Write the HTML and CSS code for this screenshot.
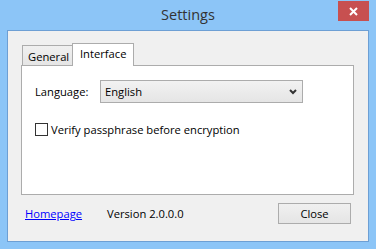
FILE: index.html
```html
<!DOCTYPE html>
<html lang="en">
<head>
  <meta charset="UTF-8">
  <title>Settings</title>
  <link rel="stylesheet" href="styles.css">
</head>
<body>
  <div class="window">
    <div class="titlebar">
      <span></span>
      <div class="title">Settings</div>
      <div class="close-x">
        <svg width="9" height="9" viewBox="0 0 9 9">
          <path d="M1 1 L8 8 M8 1 L1 8" stroke="#fff" stroke-width="2"/>
        </svg>
      </div>
    </div>
    <div class="client">
      <div class="tabs">
        <div class="tab">General</div>
        <div class="tab active">Interface</div>
      </div>
      <div class="panel">
        <div class="lang-row">
          <span class="label">Language:</span>
          <div class="select">
            <span>English</span>
            <svg width="8" height="6" viewBox="0 0 8 6">
              <path d="M1 1 L4 4 L7 1" stroke="#333" stroke-width="2" fill="none"/>
            </svg>
          </div>
        </div>
        <div class="check-row">
          <span class="checkbox"></span>
          <span>Verify passphrase before encryption</span>
        </div>
      </div>
      <div class="footer">
        <a class="link" href="#">Homepage</a>
        <span class="version">Version 2.0.0.0</span>
        <div class="button">Close</div>
      </div>
    </div>
  </div>
</body>
</html>
```

FILE: styles.css
```css
body {
  margin: 0;
  font-family: "Open Sans", "Noto Sans", sans-serif;
  font-size: 11.2px;
  color: #000;
}
.window {
  width: 376px;
  height: 249px;
  box-sizing: border-box;
  background-color: #8cc5f7;
}
.titlebar {
  height: 30px;
  display: grid;
  grid-template-columns: 1fr auto 1fr;
  padding: 0 7px;
}
.title {
  font-size: 14.5px;
  line-height: 29px;
  color: #333;
}
.close-x {
  justify-self: end;
  width: 31px;
  height: 20px;
  margin-top: 1px;
  background-color: #c75050;
  display: flex;
  align-items: center;
  justify-content: center;
}
.client {
  height: 212px;
  box-sizing: border-box;
  margin: 0 7px;
  padding: 12px 14px 0 13px;
  border: 1px solid #6d9fd4;
  background-color: #f0f0f0;
}
.tabs {
  height: 22px;
  display: flex;
  align-items: flex-end;
  padding-left: 1px;
}
.tab {
  width: 52px;
  height: 20px;
  box-sizing: border-box;
  padding: 1px 0 0 5px;
  line-height: 19px;
  border: 1px solid #acacac;
  border-bottom: none;
  background: linear-gradient(#f0f0f0, #e5e5e5);
}
.tab.active {
  width: 62px;
  height: 23px;
  margin-left: -2px;
  margin-bottom: -1px;
  padding: 0 0 0 7px;
  line-height: 19px;
  background: #fff;
  position: relative;
}
.panel {
  height: 130px;
  box-sizing: border-box;
  border: 1px solid #acacac;
  background-color: #fff;
  padding: 14px 13px 0;
}
.lang-row {
  display: flex;
  align-items: center;
}
.label {
  width: 65px;
}
.select {
  width: 203px;
  height: 23px;
  box-sizing: border-box;
  border: 1px solid #acacac;
  background: linear-gradient(#f2f2f2, #e5e5e5);
  display: flex;
  align-items: center;
  justify-content: space-between;
  padding: 0 5px 0 4px;
}
.check-row {
  margin-top: 19px;
  display: flex;
  align-items: center;
}
.checkbox {
  width: 13px;
  height: 13px;
  box-sizing: border-box;
  border: 1px solid #333;
  margin-right: 3px;
}
.footer {
  display: flex;
  align-items: center;
  margin-top: 8px;
  padding: 0 3px 0 4px;
}
.link {
  width: 58px;
  color: #0000ff;
}
.version {
  margin-left: 24px;
}
.button {
  margin-left: auto;
  width: 73px;
  height: 21px;
  box-sizing: border-box;
  border: 1px solid #acacac;
  background: linear-gradient(#f0f0f0, #e5e5e5);
  text-align: center;
  line-height: 19px;
}
```
